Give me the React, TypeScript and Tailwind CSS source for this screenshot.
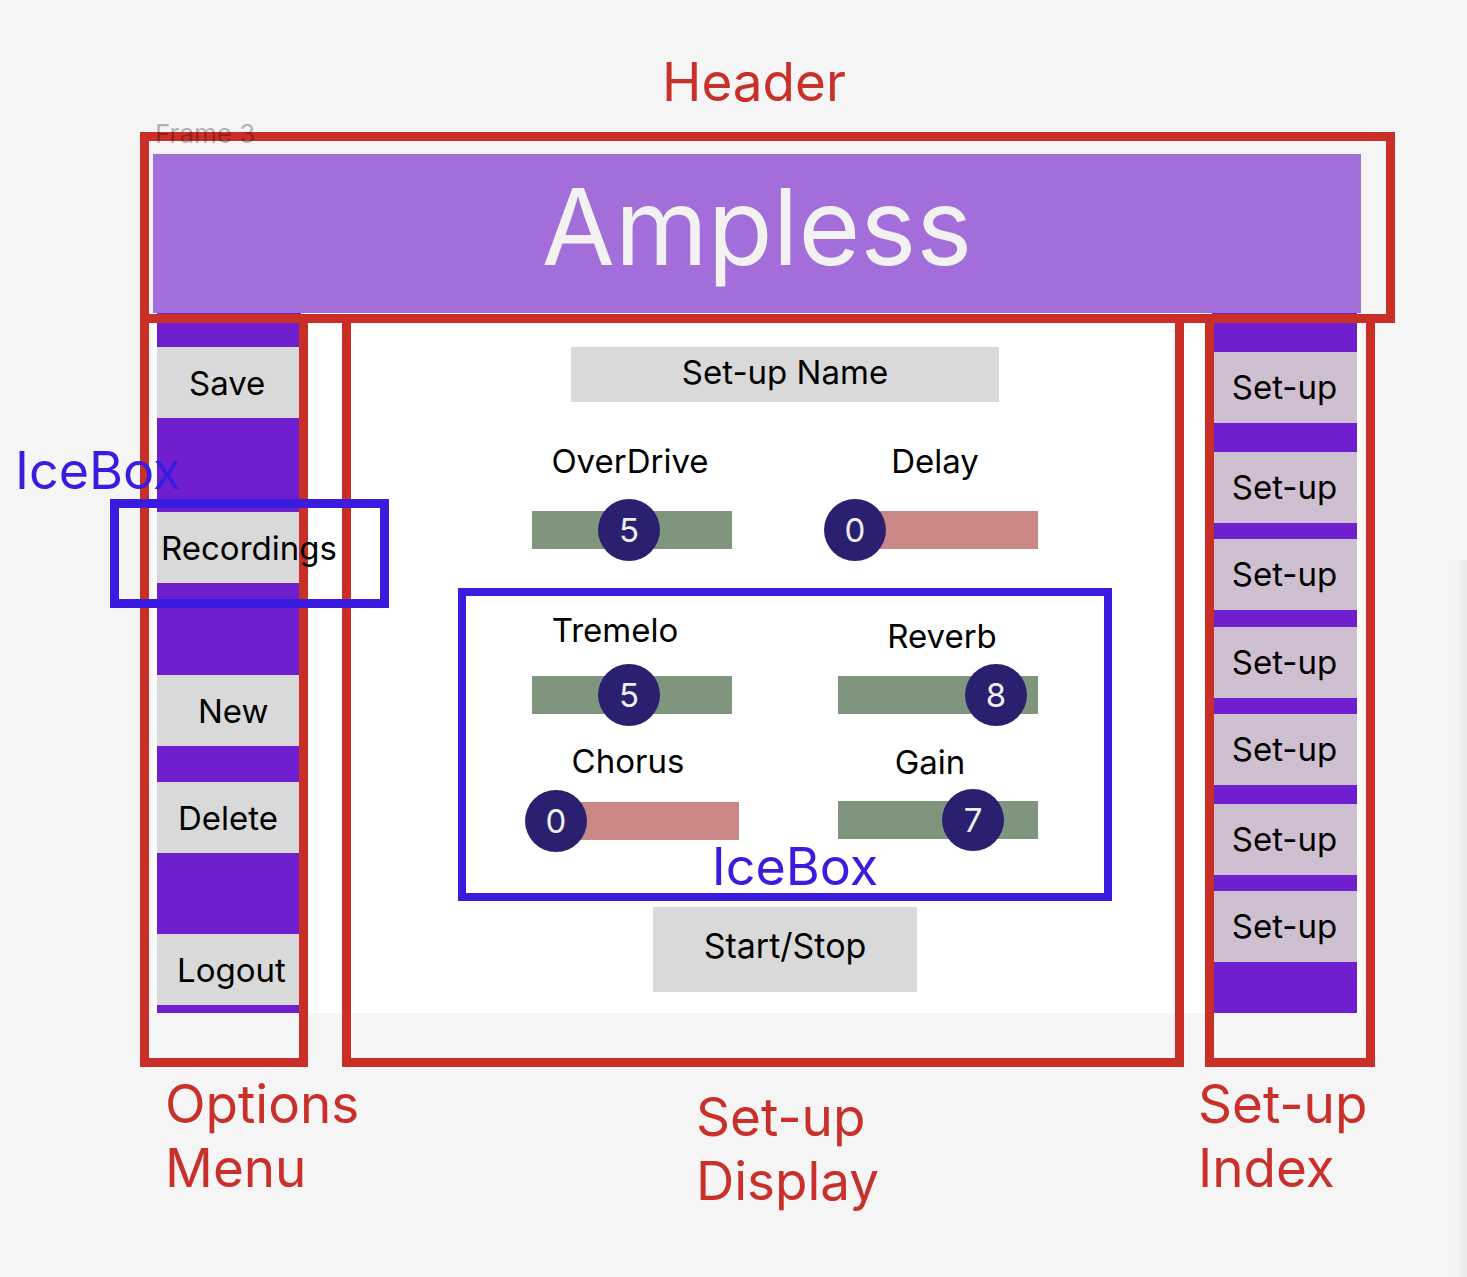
import React from "react";

type SliderProps = {
  label: string;
  value: number;
  pos: number;
  pink?: boolean;
  labelCls: string;
  barCls: string;
};

function Slider({ label, value, pos, pink, labelCls, barCls }: SliderProps) {
  return (
    <div className="w-[200px] flex flex-col shrink-0">
      <div className={"text-[33px] leading-[38px] text-black text-center whitespace-nowrap " + labelCls}>{label}</div>
      <div className={"relative h-[38px] " + (pink ? "bg-[#c98886]" : "bg-[#80957e]") + " " + barCls}>
        <div
          className="absolute top-[-12px] w-[62px] h-[62px] rounded-full bg-[#2b1f70] flex items-center justify-center text-[33px] leading-none text-[#eeeeee]"
          style={{ left: pos - 31 }}
        >
          {value}
        </div>
      </div>
    </div>
  );
}

const menu = [
  { t: "Save", cls: "mt-[34px] pl-[32px]" },
  { t: "Recordings", cls: "mt-[94px] pl-[4px]" },
  { t: "New", cls: "mt-[92px] pl-[41px]" },
  { t: "Delete", cls: "mt-[36px] pl-[21px]" },
  { t: "Logout", cls: "mt-[81px] pl-[20px]" },
];

const index = ["mt-[39px]", "mt-[29px]", "mt-[16px]", "mt-[17px]", "mt-[16px]", "mt-[19px]", "mt-[16px]"];

export default function App() {
  return (
    <div className="relative w-[1467px] h-[1277px] overflow-hidden bg-[#f5f5f5] font-['Inter',sans-serif] pt-[154px] pl-[153px]">
      {/* Frame */}
      <div className="w-[1208px] h-[859px] bg-white flex flex-col">
        <div className="h-[159px] bg-[#a36ed9] flex items-center justify-center">
          <span className="text-[106px] leading-none text-[#f2f2f2] pb-[14px]">Ampless</span>
        </div>
        <div className="flex flex-1">
          {/* Options menu */}
          <div className="ml-[4px] w-[144px] bg-[#701fcf] flex flex-col">
            {menu.map((m) => (
              <div key={m.t} className={"h-[71px] bg-[#d9d9d9] flex items-center text-[33px] text-black whitespace-nowrap pt-[3px] " + m.cls}>
                <span className="relative z-10">{m.t}</span>
              </div>
            ))}
          </div>
          {/* Set-up display */}
          <div className="flex-1 flex flex-col">
            <div className="mt-[34px] ml-[270px] w-[428px] h-[55px] bg-[#d9d9d9] flex items-center justify-center text-[33px] text-black pb-[4px]">
              Set-up Name
            </div>
            <div className="flex items-start mt-[40px] ml-[231px] gap-[106px]">
              <Slider label="OverDrive" value={5} pos={97} labelCls="pr-[4px]" barCls="mt-[31px]" />
              <Slider label="Delay" value={0} pos={17} pink labelCls="pr-[6px]" barCls="mt-[31px]" />
            </div>
            <div className="ml-[157px] mt-[39px] w-[654px] h-[313px] border-[8px] border-[#3a1ce0] flex flex-col">
              <div className="flex items-start mt-[15px] ml-[66px] gap-[106px]">
                <Slider label="Tremelo" value={5} pos={97} labelCls="pr-[34px]" barCls="mt-[27px]" />
                <Slider label="Reverb" value={8} pos={158} labelCls="pl-[8px] mt-[6px]" barCls="mt-[21px]" />
              </div>
              <div className="flex items-start mt-[28px] ml-[73px] gap-[99px]">
                <Slider label="Chorus" value={0} pos={17} pink labelCls="pr-[22px]" barCls="mt-[22px]" />
                <Slider label="Gain" value={7} pos={135} labelCls="pr-[16px] mt-[1px]" barCls="mt-[20px]" />
              </div>
              <div className="text-[52px] leading-[54px] text-[#3a1ce0] text-center pl-[20px]">IceBox</div>
            </div>
            <div className="ml-[352px] mt-[6px] w-[264px] h-[85px] bg-[#d9d9d9] flex items-center justify-center text-[34px] text-black pb-[8px]">
              Start/Stop
            </div>
          </div>
          {/* Set-up index */}
          <div className="mr-[4px] w-[145px] bg-[#701fcf] flex flex-col">
            {index.map((c, i) => (
              <div key={i} className={"h-[71px] bg-[#cfc0d1] flex items-center justify-center text-[33px] text-black " + c}>
                Set-up
              </div>
            ))}
          </div>
        </div>
      </div>

      {/* Annotations */}
      <div className="absolute left-[155px] top-[118px] text-[26px] leading-[32px] text-black/30 z-20">Frame 3</div>

      <div className="absolute left-[140px] top-[132px] w-[1255px] h-[191px] border-[9px] border-[#c92f26]" />
      <div className="absolute left-[140px] top-[314px] w-[168px] h-[753px] border-[9px] border-[#c92f26]" />
      <div className="absolute left-[342px] top-[314px] w-[842px] h-[753px] border-[9px] border-[#c92f26]" />
      <div className="absolute left-[1205px] top-[314px] w-[170px] h-[753px] border-[9px] border-[#c92f26]" />

      <div className="absolute left-[110px] top-[499px] w-[279px] h-[109px] border-[9px] border-[#3a1ce0]" />
      <div className="absolute left-[15px] top-[441px] text-[52px] leading-[60px] text-[#3a1ce0]">IceBox</div>

      <div className="absolute left-[662px] top-[50px] text-[53px] leading-[64px] text-[#c9302a]">Header</div>
      <div className="absolute left-[165px] top-[1072px] text-[53px] leading-[64px] text-[#c9302a]">
        Options
        <br />
        Menu
      </div>
      <div className="absolute left-[696px] top-[1085px] text-[53px] leading-[64px] text-[#c9302a]">
        Set-up
        <br />
        Display
      </div>
      <div className="absolute left-[1198px] top-[1072px] text-[53px] leading-[64px] text-[#c9302a]">
        Set-up
        <br />
        Index
      </div>

      <div className="absolute right-0 top-[560px] bottom-0 w-[24px] bg-linear-to-r from-transparent via-transparent to-black/[0.05]" />
    </div>
  );
}
